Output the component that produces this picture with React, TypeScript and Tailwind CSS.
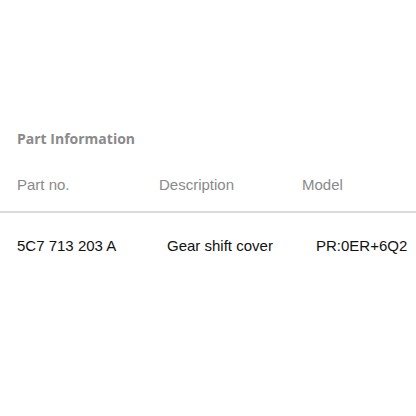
export default function App() {
  return (
    <div className="w-[416px] h-[416px] bg-white overflow-hidden pt-[129px]">
      <h2 className="px-[17px] text-[14px] leading-[20px] font-bold text-[#8a8a8a] font-['Open_Sans',sans-serif]">
        Part Information
      </h2>
      <div className="mt-[26px] flex px-[17px] h-[20px] items-center text-[15px] text-[#8a8a8a] font-['Liberation_Sans',Arial,sans-serif] whitespace-nowrap">
        <div className="w-[142px] shrink-0">Part no.</div>
        <div className="w-[143px] shrink-0">Description</div>
        <div>Model</div>
      </div>
      <div className="mt-[16px] h-[2px] bg-[#dcdcdc]" />
      <div className="mt-[23px] flex pl-[17px] h-[20px] items-center text-[15px] text-[#111111] font-['Liberation_Sans',Arial,sans-serif] whitespace-nowrap">
        <div className="w-[150px] shrink-0">5C7 713 203 A</div>
        <div className="w-[149px] shrink-0">Gear shift cover</div>
        <div className="shrink-0">PR:0ER+6Q2</div>
      </div>
    </div>
  );
}
